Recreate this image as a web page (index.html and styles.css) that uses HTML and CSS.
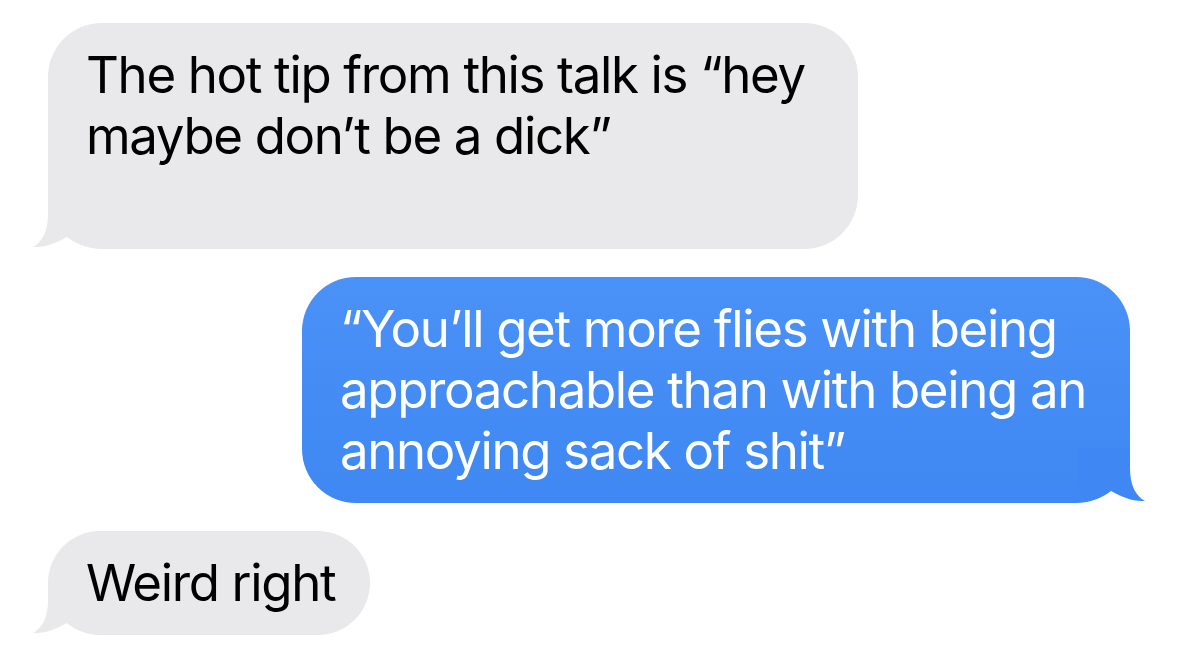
FILE: index.html
```html
<!DOCTYPE html>
<html lang="en">
<head>
    <meta charset="UTF-8">
    <meta name="viewport" content="width=device-width, initial-scale=1.0">
    <title>Messages</title>
    <link rel="stylesheet" href="styles.css">
</head>
<body>
    <div class="thread">
        <div class="bubble received tall">
            The hot tip from this talk is “hey<br>
            maybe don’t be a dick”
            <svg class="tail" viewBox="0 0 80 56" width="80" height="56"><path d="M18 0 L18 20 C18 38 12 48 3 53 C15 54 28 48 37 43 C45 49 55 54 70 54 L70 0 Z"/></svg>
        </div>
        <div class="bubble sent">
            “You’ll get more flies with being<br>
            approachable than with being an<br>
            annoying sack of shit”
            <svg class="tail" viewBox="0 0 80 56" width="80" height="56"><path d="M18 0 L18 20 C18 38 12 48 3 53 C15 54 28 48 37 43 C45 49 55 54 70 54 L70 0 Z"/></svg>
        </div>
        <div class="bubble received short">
            Weird right
            <svg class="tail" viewBox="0 0 80 56" width="80" height="56"><path d="M18 0 L18 20 C18 38 12 48 3 53 C15 54 28 48 37 43 C45 49 55 54 70 54 L70 0 Z"/></svg>
        </div>
    </div>
</body>
</html>
```

FILE: styles.css
```css
body {
    margin: 0;
    background: #fff;
    font-family: Inter, "Noto Sans", sans-serif;
}

.thread {
    display: flex;
    flex-direction: column;
    gap: 28px;
    padding: 23px 0 0 48px;
    width: 1082px;
}

.bubble {
    position: relative;
    z-index: 0;
    box-sizing: border-box;
    padding: 21px 38px 22px;
    border-radius: 54px;
    font-size: 51px;
    line-height: 61px;
    letter-spacing: -1.35px;
    white-space: nowrap;
}

.received {
    align-self: flex-start;
    background: #e9e9eb;
    color: #000;
}

.received .tail {
    fill: #e9e9eb;
}

.sent {
    align-self: flex-end;
    width: 828px;
    background: linear-gradient(180deg, #4a92f7, #3f87f2);
    color: #fff;
}

.sent .tail {
    fill: #3f87f2;
    left: auto;
    right: -18px;
    transform: scaleX(-1);
}

.tall {
    width: 810px;
    padding-bottom: 83px;
}

.short {
    width: 322px;
}

/* sits under the text, over the bubble background */
.tail {
    position: absolute;
    z-index: -1;
    left: -18px;
    bottom: -1px;
    display: block;
}
```
